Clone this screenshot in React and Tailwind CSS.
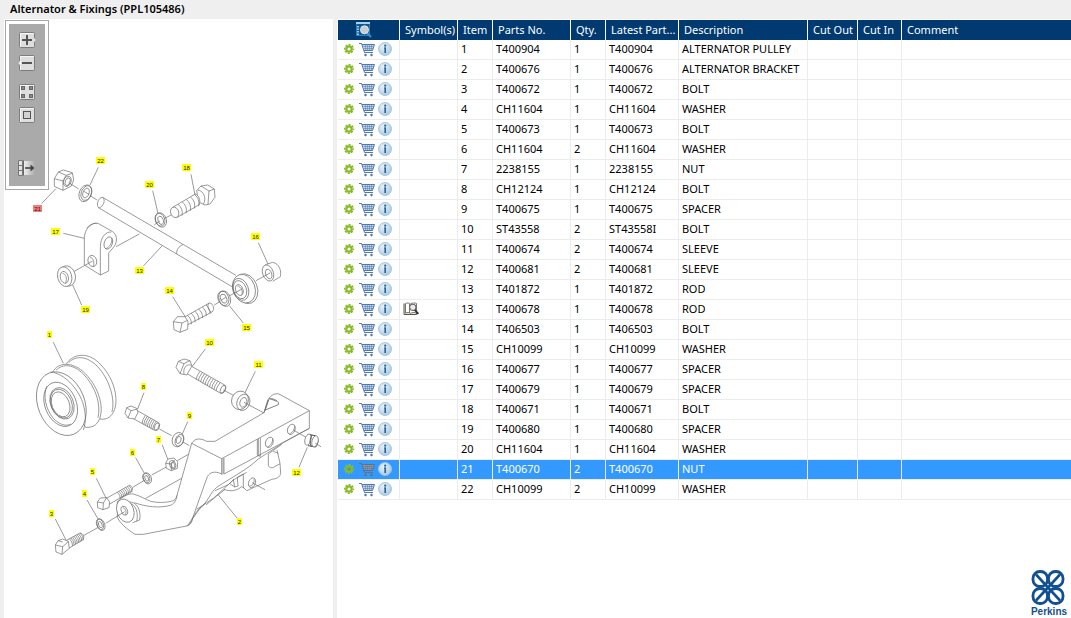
import { useState } from "react";

const parts = [
  { item: "1", no: "T400904", qty: "1", latest: "T400904", desc: "ALTERNATOR PULLEY" },
  { item: "2", no: "T400676", qty: "1", latest: "T400676", desc: "ALTERNATOR BRACKET" },
  { item: "3", no: "T400672", qty: "1", latest: "T400672", desc: "BOLT" },
  { item: "4", no: "CH11604", qty: "1", latest: "CH11604", desc: "WASHER" },
  { item: "5", no: "T400673", qty: "1", latest: "T400673", desc: "BOLT" },
  { item: "6", no: "CH11604", qty: "2", latest: "CH11604", desc: "WASHER" },
  { item: "7", no: "2238155", qty: "1", latest: "2238155", desc: "NUT" },
  { item: "8", no: "CH12124", qty: "1", latest: "CH12124", desc: "BOLT" },
  { item: "9", no: "T400675", qty: "1", latest: "T400675", desc: "SPACER" },
  { item: "10", no: "ST43558", qty: "2", latest: "ST43558I", desc: "BOLT" },
  { item: "11", no: "T400674", qty: "2", latest: "T400674", desc: "SLEEVE" },
  { item: "12", no: "T400681", qty: "2", latest: "T400681", desc: "SLEEVE" },
  { item: "13", no: "T401872", qty: "1", latest: "T401872", desc: "ROD" },
  { item: "13", no: "T400678", qty: "1", latest: "T400678", desc: "ROD", symbol: true },
  { item: "14", no: "T406503", qty: "1", latest: "T406503", desc: "BOLT" },
  { item: "15", no: "CH10099", qty: "1", latest: "CH10099", desc: "WASHER" },
  { item: "16", no: "T400677", qty: "1", latest: "T400677", desc: "SPACER" },
  { item: "17", no: "T400679", qty: "1", latest: "T400679", desc: "SPACER" },
  { item: "18", no: "T400671", qty: "1", latest: "T400671", desc: "BOLT" },
  { item: "19", no: "T400680", qty: "1", latest: "T400680", desc: "SPACER" },
  { item: "20", no: "CH11604", qty: "1", latest: "CH11604", desc: "WASHER" },
  { item: "21", no: "T400670", qty: "2", latest: "T400670", desc: "NUT" },
  { item: "22", no: "CH10099", qty: "2", latest: "CH10099", desc: "WASHER" },
];

const callouts = [
  ["22", 100, 160], ["18", 186, 167], ["20", 149, 184], ["21", 37, 208],
  ["17", 55, 231], ["16", 255, 236], ["13", 139, 270], ["14", 169, 290],
  ["19", 85, 309], ["15", 246, 327], ["1", 49, 334], ["10", 209, 342],
  ["11", 258, 364], ["8", 143, 386], ["9", 189, 415], ["7", 158, 439],
  ["6", 132, 452], ["12", 296, 472], ["5", 92, 471], ["4", 84, 493],
  ["3", 51, 513], ["2", 239, 521],
];

// tilted ellipse
function El({ x, y, a, b, r = -20, fill = "none" }) {
  return <ellipse cx={x} cy={y} rx={a} ry={b} transform={`rotate(${r} ${x} ${y})`} fill={fill} />;
}

// thread lines between two points of a bolt shank, dx/dy goes across it
function Thread({ x1, y1, x2, y2, dx, dy, n, bow = 6 }) {
  let d = "";
  for (let i = 0; i < n; i++) {
    const x = x1 + ((x2 - x1) * i) / (n - 1);
    const y = y1 + ((y2 - y1) * i) / (n - 1);
    d += `M${x} ${y}q${dx / 2 + bow} ${dy / 2 - bow / 2} ${dx} ${dy}`;
  }
  return <path d={d} />;
}

function Diagram({ selected }) {
  return (
    <svg viewBox="4 19 329 599" className="block h-auto w-full" role="img" aria-label="Alternator & Fixings">
      <g fill="none" stroke="#6f6f6f" strokeWidth="2.1" strokeLinejoin="round">
        {/* nut 21, washer 22, rod, spacers 17 and 19, bolt 18 */}
        <g transform="translate(30 150) scale(.33333)">
          <path d="M78 116 35 160M205 52 180 105M341 347 396 288M100 250 163 265M128 405 155 465M368 122 384 190" />
          <path d="M73 86 85 66 100 60 127 68 131 90 124 108 99 121 73 109ZM73 86 99 93V121M99 93 108 76 127 70M85 66 108 76" />
          <El x={112} y={94} a={11} b={16} r={20} />
          <El x={113} y={95} a={7} b={12} r={20} />
          <path d="M116 98 146 117M174 133 201 150" />
          <El x={166} y={130} a={18} b={26} r={22} fill="#fff" />
          <El x={169} y={129} a={15} b={23} r={22} />
          <El x={168} y={129} a={9} b={15} r={22} />
          <path d="M162 124 178 134" />
          <path d="M218 142 606 350 606 410 207 174C197 167 204 142 218 142Z" fill="#fff" stroke="none" />
          <path d="M218 142 618 376M207 174 606 410M218 142C204 142 197 167 207 174" />
          <path d="M218 142C228 150 220 170 207 174M459 284C446 288 439 300 440 312" />
          <path d="M163 345V262C165 235 185 216 204 220L248 245C263 255 262 277 252 290L236 309V363L211 375ZM211 375V290C212 262 226 245 244 246M170 235C176 226 190 219 200 220" fill="#fff" />
          <El x={235} y={279} a={12} b={19} r={20} />
          <path d="M228 296C240 290 248 276 245 264" />
          <El x={187} y={333} a={13} b={17} r={-15} />
          <path d="M180 321C190 324 194 336 190 348" />
          <path d="M258 290 328 252M133 364 188 333" />
          <El x={112} y={378} a={24} b={31} r={-15} fill="#fff" />
          <El x={104} y={380} a={21} b={30} r={-15} fill="#fff" />
          <El x={103} y={382} a={12} b={18} r={-15} />
          <path d="M98 370C108 372 112 386 107 398" />
          <El x={393} y={210} a={16} b={22} fill="#fff" />
          <El x={390} y={209} a={14} b={20} />
          <El x={392} y={211} a={8} b={13} />
          <path d="M373 224 390 213M402 206 435 189" />
          <path d="M500 122 513 108 533 105 553 117 555 142 540 162 525 165 506 156Z" fill="#fff" />
          <path d="M513 108 537 123 553 117M537 123 534 163M503 120C522 122 530 146 520 163" />
          <path d="M428 172 496 132C507 136 512 150 508 164L440 203" fill="#fff" />
          <El x={434} y={187} a={12} b={16} fill="#fff" />
          <Thread x1={444} y1={163} x2={494} y2={134} dx={12} dy={34} n={5} bow={10} />
          <path d="M483 73 495 135" />
        </g>

        {/* rod end, spacer 16, washer 15, bolt 14 */}
        <g transform="translate(150 150) scale(.33333)">
          <El x={288} y={416} a={34} b={46} fill="#fff" />
          <El x={282} y={416} a={33} b={44} fill="#fff" />
          <El x={272} y={418} a={23} b={34} />
          <El x={270} y={419} a={19} b={28} />
          <El x={268} y={420} a={11} b={17} />
          <path d="M262 408C274 410 280 424 275 435" />
          <path d="M193 465 222 447M230 442 276 417M318 392 340 380" />
          <path d="M346 344 368 337C388 341 395 362 391 380L368 394" fill="#fff" />
          <El x={354} y={369} a={16} b={25} fill="#fff" />
          <El x={356} y={372} a={9} b={15} />
          <path d="M340 380 360 369M325 278 354 342" />
          <El x={224} y={446} a={17} b={24} fill="#fff" />
          <El x={220} y={445} a={16} b={22} />
          <El x={221} y={446} a={9} b={14} />
          <path d="M212 451 228 442M238 467 280 519" />
          <path d="M102 502 178 459C192 460 194 480 186 486L110 526" fill="#fff" />
          <path d="M178 459C170 464 174 482 184 486" />
          <Thread x1={112} y1={496} x2={168} y2={465} dx={12} dy={27} n={6} bow={7} />
          <path d="M70 515 82 500 105 500 114 514 113 538 90 547 72 539Z" fill="#fff" />
          <path d="M70 515 96 519 90 547M96 519 112 511M68 440 105 499" />
        </g>

        {/* pulley 1, bolt 8 */}
        <g transform="translate(20 320) scale(.33333)">
          <path d="M140 130C162 99 208 95 243 135 283 176 298 240 281 275 271 294 256 300 240 297L180 200Z" fill="#fff" />
          <path d="M146 128C168 105 202 108 233 140 268 178 286 236 276 276" />
          <path d="M98 157C112 126 158 122 197 162 237 204 252 260 239 296 230 318 215 323 197 322L140 240Z" fill="#fff" />
          <path d="M108 151C128 130 160 132 191 163 228 203 243 252 234 293" />
          <El x={124} y={251} a={70} b={99} r={-22} fill="#fff" />
          <path d="M92 156C132 160 172 203 188 247 198 280 199 305 190 330" />
          <El x={122} y={253} a={47} b={69} r={-22} />
          <path d="M80 199C70 225 75 265 100 295 118 314 138 320 152 312" />
          <El x={126} y={250} a={34} b={49} r={-22} />
          <El x={124} y={251} a={31} b={45} r={-22} />
          <El x={122} y={253} a={26} b={39} r={-22} />
          <path d="M100 67 130 130" />
          <path d="M345 268 416 308C420 315 414 330 404 331L340 296" fill="#fff" />
          <El x={411} y={320} a={7} b={12} r={20} />
          <Thread x1={376} y1={286} x2={408} y2={304} dx={-10} dy={25} n={7} bow={-5} />
          <path d="M315 280 320 263 333 258 350 265 354 278 344 297 324 294Z" fill="#fff" />
          <path d="M320 263 333 272 352 267M333 272 324 294M372 218 353 267M418 327 455 347" />
        </g>

        {/* bolt 10, sleeve 11 */}
        <g transform="translate(160 330) scale(.33333)">
          <path d="M286 124 255 188" />
          <path d="M84 103 194 165C200 172 194 188 182 190L76 128" fill="#fff" />
          <El x={189} y={178} a={7} b={13} r={25} />
          <Thread x1={120} y1={124} x2={180} y2={158} dx={-12} dy={25} n={10} bow={-5} />
          <path d="M48 112 55 94 72 87 90 92 96 108 80 135 60 131Z" fill="#fff" />
          <path d="M55 94 72 101 90 92M72 101 60 131" />
          <path d="M94 106C82 100 68 112 72 132" />
          <path d="M190 180 222 197M136 57 97 109" />
          <El x={240} y={211} a={25} b={28} r={20} fill="#fff" />
          <El x={250} y={217} a={19} b={25} r={20} />
          <El x={250} y={217} a={10} b={15} r={20} />
          <path d="M252 217 312 249" />
        </g>

        {/* bracket 2 and the small parts round it */}
        <g transform="translate(100 390) scale(.33333)">
          <path d="M263 95 247 132M187 165 203 207M107 203 133 250M412 385 355 315M597 232 622 172" />
          <path d="M275 160C284 145 300 143 320 154L345 154 492 68 502 34C508 18 524 8 537 12L628 62V115L550 158 475 207C440 240 395 262 350 292 330 308 325 335 300 355L278 386C274 400 270 406 260 408L130 433H105C85 420 62 403 52 382V335C70 318 85 310 100 312 122 318 136 328 152 334 178 340 205 337 220 332 228 328 229 322 231 316Z" fill="#fff" />
          <path d="M275 160 365 206 628 62M365 206V254M369 205V253M372 204V252L628 115M472 148V196L481 199V144M475 147V197M365 252C345 242 330 246 322 260L280 378C276 392 272 402 260 408" />
          <path d="M104 338C135 350 180 356 214 345 226 338 229 328 231 316M137 325 245 265M265 404 292 362 315 340M290 358 340 325 400 270 440 247" />
          <path d="M492 68 505 30C512 22 528 28 535 37V44L496 60M508 25 530 34M495 62 506 30" strokeWidth="2.6" />
          <El x={508} y={157} a={11} b={16} r={22} />
          <path d="M502 171C512 167 520 155 517 145" />
          <El x={574} y={118} a={11} b={16} r={22} />
          <path d="M568 132C578 128 586 116 583 106M580 120 618 142" />
          <path d="M505 192V226C508 234 516 236 524 230L540 221M505 192 545 163M531 180 540 220 542 250C540 262 530 266 515 268L440 302 430 292V252M520 184 535 190" />
          <path d="M430 252 412 262 414 288 404 291 400 268M388 280 404 291M372 298C390 306 412 302 424 290L432 294M345 302 385 284 402 268M318 345 350 318 375 298" />
          <El x={456} y={278} a={10} b={15} r={20} />
          <path d="M448 288C458 288 464 278 462 268M456 278 495 299" />
          <path d="M85 336C112 334 124 362 119 390L98 398M90 340C108 345 116 370 110 394" fill="#fff" />
          <El x={76} y={362} a={25} b={36} fill="#fff" />
          <El x={73} y={362} a={9} b={14} />
          <path d="M68 353C78 356 80 366 76 374M17 400 74 365" />
          <path d="M238 150 268 167M155 255 205 228M232 212 265 193" />
          <El x={234} y={149} a={17} b={22} r={20} fill="#fff" />
          <El x={238} y={151} a={12} b={18} r={20} />
          <El x={236} y={150} a={7} b={11} r={20} />
          <path d="M197 220 204 207 222 204 233 215 232 235 214 242 199 235ZM197 220 214 222V242M214 222 224 209" fill="#fff" />
          <El x={218} y={224} a={9} b={13} r={-15} />
          <El x={219} y={225} a={5} b={9} r={-15} />
          <El x={142} y={265} a={12} b={17} fill="#fff" />
          <El x={139} y={264} a={10} b={15} />
          <El x={140} y={265} a={5} b={9} />
          <path d="M626 133 645 137C657 143 656 160 647 171L624 167" fill="#fff" stroke="#4a4a4a" strokeWidth="3" />
          <El x={624} y={149} a={9} b={17} r={15} fill="#fff" />
          <El x={645} y={154} a={9} b={17} r={15} fill="#fff" />
          <path d="M636 135C630 146 628 158 634 169" stroke="#4a4a4a" strokeWidth="3" />
          <path d="M646 160 663 170" />
        </g>

        {/* bolts 3 and 5, washer 4 */}
        <g transform="translate(30 440) scale(.33333)">
          <path d="M171 180 205 238M160 287 205 262M308 142 345 120" />
          <path d="M108 302 150 279C162 280 164 294 158 300L116 325" fill="#fff" />
          <Thread x1={118} y1={296} x2={150} y2={279} dx={10} dy={22} n={8} bow={5} />
          <path d="M76 315 84 302 98 297 115 304 118 325 96 343 78 336Z" fill="#fff" />
          <path d="M76 315 98 320 96 343M98 320 115 305M84 302 98 306M76 237 108 300" />
          <El x={213} y={254} a={11} b={18} fill="#fff" />
          <El x={210} y={253} a={10} b={17} />
          <El x={211} y={254} a={5} b={10} />
          <path d="M226 177 298 136C309 138 310 150 304 154L234 195" fill="#fff" />
          <Thread x1={262} y1={157} x2={297} y2={137} dx={9} dy={20} n={8} bow={5} />
          <path d="M202 186 211 174 230 173 239 186 237 203 219 209 203 203Z" fill="#fff" />
          <path d="M202 186 220 189 219 209M220 189 230 173M199 115 228 174" />
        </g>
      </g>

      <g fontFamily='"Liberation Sans", Arial, sans-serif' fontSize="6" textAnchor="middle">
        {callouts.map(([n, x, y]) => (
          <g key={n}>
            <rect
              x={n.length > 1 ? x - 4 : x - 2}
              y={y - 3}
              width={n.length > 1 ? 9 : 5}
              height="7"
              fill={n === selected ? "#f77b7b" : "#ffff00"}
            />
            <text x={x + 0.5} y={y + 2.6} fill="#222200">{n}</text>
          </g>
        ))}
      </g>
    </svg>
  );
}

function ToolIcon({ children }) {
  return (
    <svg viewBox="0 0 20 16" className="block h-4 w-5">
      {children}
    </svg>
  );
}

function Face() {
  return (
    <>
      <rect x="2.5" y=".5" width="15" height="15" rx="1" fill="#dedede" stroke="#7d7d7d" />
      <path d="M3.500 14.500V1.500H16.500" fill="none" stroke="#f6f6f6" />
    </>
  );
}

function Toolbar() {
  return (
    <div className="absolute left-px top-px border border-[#a8a8a8] bg-white p-[3px]">
      <div className="flex flex-col items-center bg-[#aaaaaa] px-2 pt-2 pb-[10px]">
        <button aria-label="Zoom in" className="mb-[7px]">
          <ToolIcon>
            <Face />
            <path d="M17 5.500 19.500 8 17 10.500" fill="#e4e4e4" stroke="#888" strokeWidth=".6" />
            <path d="M5 8H15M10 3V13" stroke="#555" strokeWidth="2" />
          </ToolIcon>
        </button>
        <button aria-label="Zoom out" className="mb-[13px]">
          <ToolIcon>
            <Face />
            <path d="M3 5.500 .5 8 3 10.500" fill="#e4e4e4" stroke="#888" strokeWidth=".6" />
            <path d="M5 8H15" stroke="#555" strokeWidth="2" />
          </ToolIcon>
        </button>
        <button aria-label="Fit to window" className="mb-[7px]">
          <ToolIcon>
            <Face />
            <g fill="#888" stroke="#666">
              <rect x="4.500" y="2.500" width="3" height="3" />
              <rect x="12.500" y="2.500" width="3" height="3" />
              <rect x="4.500" y="10.500" width="3" height="3" />
              <rect x="12.500" y="10.500" width="3" height="3" />
            </g>
          </ToolIcon>
        </button>
        <button aria-label="Actual size" className="mb-[37px]">
          <ToolIcon>
            <Face />
            <rect x="6.500" y="4.500" width="7" height="7" fill="#d2d2d2" stroke="#555" />
          </ToolIcon>
        </button>
        <button aria-label="Toggle list">
          <ToolIcon>
            <defs>
              <linearGradient id="fade">
                <stop offset="0" stopColor="#eee" />
                <stop offset="1" stopColor="#aaa" />
              </linearGradient>
            </defs>
            <rect x="7" y="1" width="11" height="14" fill="url(#fade)" />
            <path d="M1.500.5H5.500V15.500H1.500ZM1.500 5.500H5.500M1.500 10.500H5.500" fill="#e4e4e4" stroke="#777" />
            <path d="M6.500 .5V15.500" stroke="#666" />
            <path d="M8 8H16" stroke="#444" strokeWidth="1.6" />
            <path d="M13.500 4.500 17.500 8 13.500 11.500Z" fill="#444" />
          </ToolIcon>
        </button>
      </div>
    </div>
  );
}

function GearIcon({ active }) {
  return (
    <svg viewBox="0 0 10 10" className="block h-[10px] w-[10px]">
      <circle cx="5" cy="5" r="4.300" fill="none" stroke="#8abf2b" strokeWidth="1.500" strokeDasharray="2.100 1.277" strokeDashoffset="1.050" />
      <circle cx="5" cy="5" r="2.700" fill={active ? "#4a90c8" : "#fff"} stroke="#86bb26" strokeWidth="2.200" />
    </svg>
  );
}

function CartIcon({ active }) {
  const c = active ? "#5f7388" : "#4f79ae";
  return (
    <svg viewBox="0 0 16 15" className="block h-[15px] w-4" fill="none" stroke={c}>
      <path d="M3.500 2.500H15.500L13.500 8H5.500Z" fill={active ? "#8b9cae" : "#c3d4e8"} stroke="none" />
      <path d="M0 1.500H2.500L5.500 10.500H14" />
      <path d="M3 2.500H15.500L13.500 8.500H5" />
      <path d="M4 4.500H14.500M4.500 6.500H14M6.500 3V8M8.500 3V8M10.500 3V8M12.500 3V8" strokeWidth=".5" />
      <circle cx="6.500" cy="13" r=".9" fill={c} strokeWidth=".8" />
      <circle cx="12.500" cy="13" r=".9" fill={c} strokeWidth=".8" />
    </svg>
  );
}

function InfoIcon() {
  return (
    <svg viewBox="0 0 14 14" className="block h-[14px] w-[14px]">
      <defs>
        <radialGradient id="glass" cx=".4" cy=".35" r=".65">
          <stop offset="0" stopColor="#e8f2f9" />
          <stop offset="1" stopColor="#a9cbe4" />
        </radialGradient>
      </defs>
      <circle cx="7" cy="7" r="6.500" fill="url(#glass)" stroke="#a3c4dc" strokeWidth=".9" />
      <path d="M6 6H7.500" stroke="#2f6595" />
      <path d="M7.200 5.500V11" stroke="#2f6595" strokeWidth="1.700" />
      <circle cx="7.200" cy="3.700" r="1.100" fill="#2f6595" />
    </svg>
  );
}

function BookIcon() {
  return (
    <svg viewBox="0 0 16 14" className="block h-[14px] w-4" fill="none" stroke="#5a554a">
      <path d="M1 1.500V12.500H13.500V11" fill="#e9e5da" />
      <path d="M2.500 1.500C4.500.6 6 .9 7.500 2 9 .9 12 .6 13.500 1.500V11C12 10.300 9 10.300 7.500 11.300 6 10.300 4.500 10.300 2.500 11Z" fill="#fff" strokeWidth=".8" />
      <path d="M6.500 2V11" strokeWidth=".8" />
      <circle cx="9.800" cy="5.300" r="3.100" fill="#ececec" stroke="#666" strokeWidth="1.100" />
      <path d="M11.800 7.800 15.300 12" stroke="#333" strokeWidth="1.900" />
    </svg>
  );
}

function SearchListIcon() {
  return (
    <svg viewBox="0 0 16 16" className="block h-4 w-4">
      <path d="M.5.500H13.500V13.500H.5Z" fill="#12578f" stroke="#2a80b9" />
      <path d="M0 1H14" stroke="#9fd4f2" strokeWidth="2" />
      <path d="M2 4V13" stroke="#cfe6f5" strokeWidth="1.500" strokeDasharray="1.500 1" />
      <path d="M11 11 15 15" stroke="#3b8fc9" strokeWidth="2.200" />
      <circle cx="8.500" cy="7.800" r="4" fill="#c6cdd3" stroke="#e4e8eb" />
    </svg>
  );
}

function Logo() {
  return (
    <svg viewBox="0 0 40 48" className="mt-auto mr-[2px] block h-12 w-10 self-end text-[#12508f]">
      <g fill="none" stroke="currentColor" strokeWidth="2.8">
        <rect x="4" y="1.500" width="14.500" height="15" rx="6.800" />
        <rect x="19.500" y="1.500" width="14.500" height="15" rx="6.800" />
        <rect x="4" y="18.500" width="14.500" height="15" rx="6.800" />
        <rect x="19.500" y="18.500" width="14.500" height="15" rx="6.800" />
        <path d="M7 4.500 31 30.500M31 4.500 7 30.500" strokeWidth="2.600" />
      </g>
      <text
        x="20"
        y="45"
        fill="currentColor"
        textAnchor="middle"
        fontFamily='"Liberation Sans", Arial, sans-serif'
        fontSize="10"
        fontWeight="bold"
      >
        Perkins
      </text>
    </svg>
  );
}

function App() {
  const [selected, setSelected] = useState(21);

  const th = "h-5 whitespace-nowrap border-r border-white p-0 pl-[5px] text-left font-normal last:border-r-0";
  const td = "h-5 truncate border-r border-b border-[#ececec] p-0 pb-px pl-[3px] last:border-r-0";

  return (
    <div className="flex min-h-screen flex-col bg-[#efefef] font-[family-name:'Noto_Sans',sans-serif] text-[11px] text-black">
      <h1 className="h-[19px] pl-[10px] text-[11px] font-semibold leading-[18px]">
        Alternator &amp; Fixings (PPL105486)
      </h1>

      <div className="grid flex-1 grid-cols-[329fr_734fr] gap-1 pl-1">
        <div className="relative bg-white">
          <Diagram selected={parts[selected].item} />
          <Toolbar />
        </div>

        <div className="flex min-w-0 flex-col bg-white pt-px pl-px">
          <table className="w-full table-fixed border-separate border-spacing-0 leading-4">
            <colgroup>
              <col className="w-[62px]" />
              <col className="w-[58px]" />
              <col className="w-[35px]" />
              <col className="w-[78px]" />
              <col className="w-[35px]" />
              <col className="w-[73px]" />
              <col className="w-[129px]" />
              <col className="w-[50px]" />
              <col className="w-[44px]" />
              <col />
            </colgroup>
            <thead className="bg-[#003a70] text-white">
              <tr>
                <th className="h-5 border-r border-white p-0 pl-[18px]">
                  <SearchListIcon />
                </th>
                <th className={th}>Symbol(s)</th>
                <th className={th}>Item</th>
                <th className={th}>Parts No.</th>
                <th className={th}>Qty.</th>
                <th className={th}>Latest Part...</th>
                <th className={th}>Description</th>
                <th className={th}>Cut Out</th>
                <th className={th}>Cut In</th>
                <th className={th}>Comment</th>
              </tr>
            </thead>
            <tbody>
              {parts.map((p, i) => {
                const active = i === selected;
                return (
                  <tr
                    key={i}
                    onClick={() => setSelected(i)}
                    className={active ? "bg-[#3399ff] text-white" : "bg-white"}
                  >
                    <td className="h-5 border-r border-b border-[#ececec] p-0 pb-px pl-[6px]">
                      <div className="flex items-center">
                        <button aria-label="Options" className="mr-[5px]">
                          <GearIcon active={active} />
                        </button>
                        <button aria-label="Add to cart" className="mr-[3px]">
                          <CartIcon active={active} />
                        </button>
                        <button aria-label="Information">
                          <InfoIcon />
                        </button>
                      </div>
                    </td>
                    <td className={td}>{p.symbol && <BookIcon />}</td>
                    <td className={td}>{p.item}</td>
                    <td className={td}>{p.no}</td>
                    <td className={td}>{p.qty}</td>
                    <td className={td}>{p.latest}</td>
                    <td className={td}>{p.desc}</td>
                    <td className={td}></td>
                    <td className={td}></td>
                    <td className={td}></td>
                  </tr>
                );
              })}
            </tbody>
          </table>

          <Logo />
        </div>
      </div>
    </div>
  );
}

export default App;
